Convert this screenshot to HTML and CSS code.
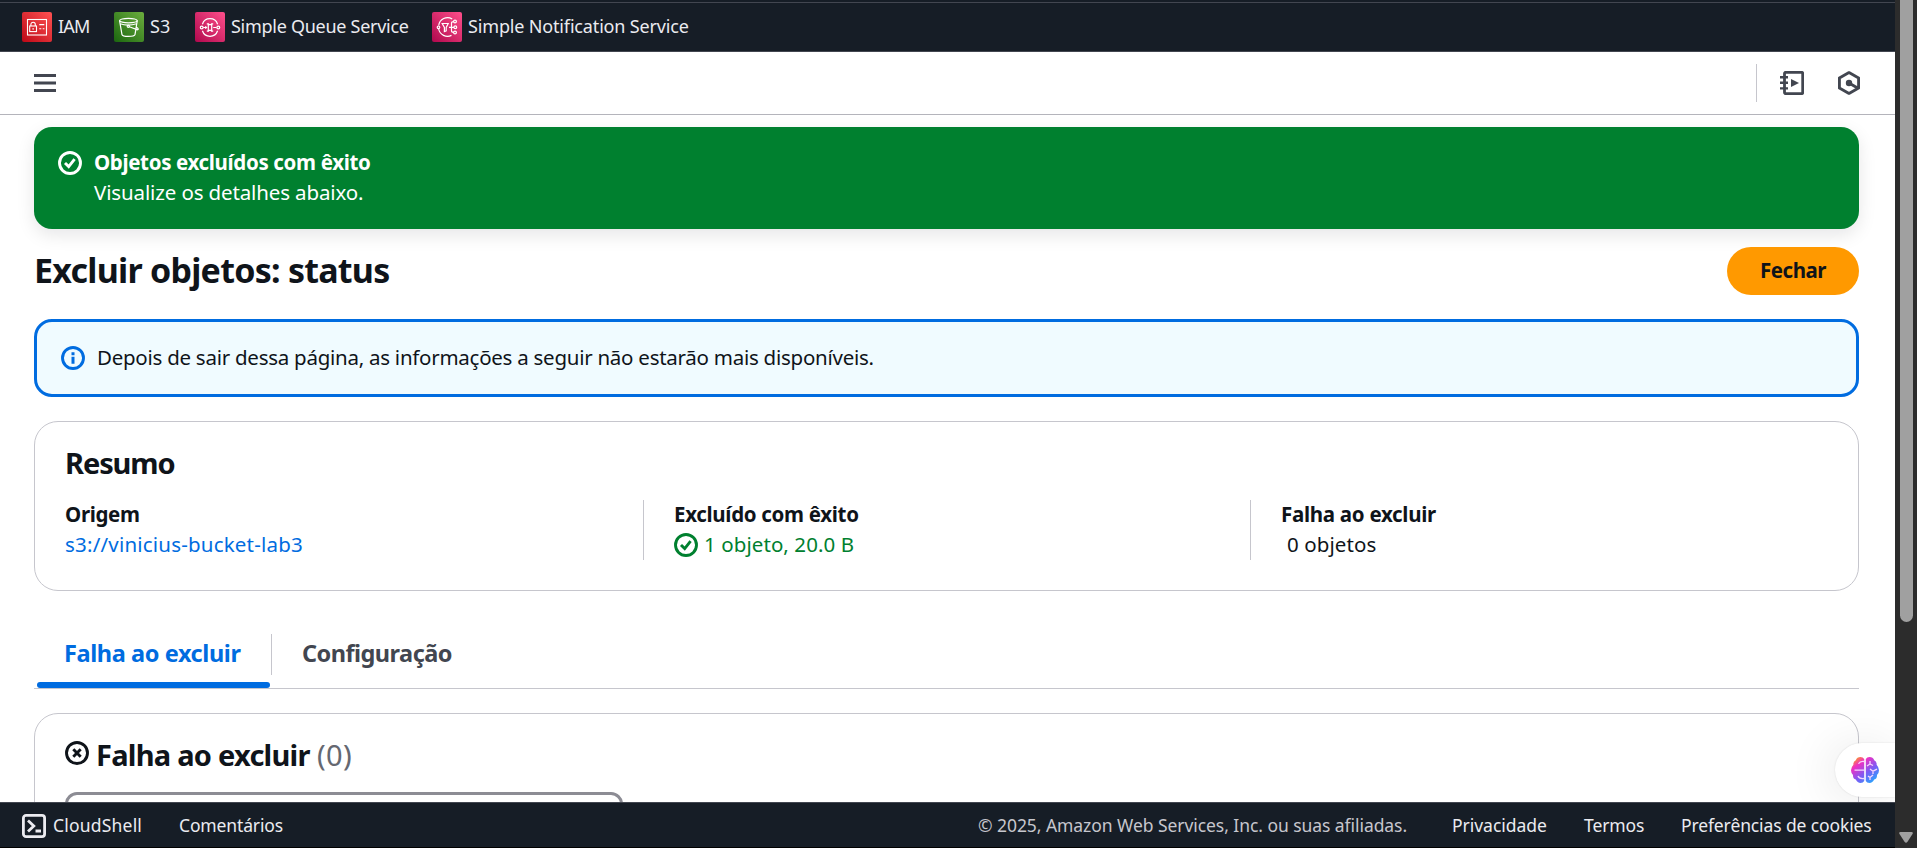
FILE: index.html
```html
<!DOCTYPE html>
<html lang="pt">
<head>
<meta charset="utf-8">
<title>Excluir objetos: status</title>
<link rel="stylesheet" href="styles.css">
</head>
<body>
<div class="window">
<div class="page">
  <nav class="favorites">
    <a class="fav fav-iam"><svg class="service" viewBox="0 0 30 30"><defs><linearGradient id="gr" x1="0" y1="1" x2="1" y2="0"><stop offset="0" stop-color="#bd0816"/><stop offset="1" stop-color="#ff5252"/></linearGradient></defs><rect width="30" height="30" rx="2" fill="url(#gr)"/><g fill="none" stroke="#fff" stroke-width="1.1"><rect x="5.5" y="7.5" width="19" height="15.5"/><rect x="7.7" y="14" width="6.8" height="5.6"/><path d="M8.9 14v-1.6a2.2 2.2 0 0 1 4.4 0V14M11.1 16v1.8M17.3 12.6h5M17.3 16.8h2M20.7 16.8h1.7"/></g></svg><span class="t-iam">IAM</span></a>
    <a class="fav fav-s3"><svg class="service" viewBox="0 0 30 30"><defs><linearGradient id="gg" x1="0" y1="1" x2="1" y2="0"><stop offset="0" stop-color="#1b660f"/><stop offset="1" stop-color="#6cae3e"/></linearGradient></defs><rect width="30" height="30" rx="2" fill="url(#gg)"/><g fill="none" stroke="#fff" stroke-width="1.2" stroke-linecap="round"><ellipse cx="14.4" cy="8.6" rx="8.8" ry="2.2"/><path d="M5.6 8.8 8 22.6q.4 1.8 6.4 1.8t6.6-1.8l2.2-13.8M6.2 11.8q7.5 2.8 16.4 0M15.3 14.7l8.2 3.1q1.2-.4.4-1.4l-1.6-1.4"/><circle cx="14.3" cy="14.3" r="1.1"/></g></svg><span class="t-s3">S3</span></a>
    <a class="fav fav-sqs"><svg class="service" viewBox="0 0 30 30"><defs><linearGradient id="gp" x1="0" y1="1" x2="1" y2="0"><stop offset="0" stop-color="#b0084d"/><stop offset="1" stop-color="#ff4f8b"/></linearGradient></defs><rect width="30" height="30" rx="2" fill="url(#gp)"/><g fill="none" stroke="#fff" stroke-width="1.2"><path d="M7.4 12.2a8 8 0 0 1 15.2 0M7.4 18.8a8 8 0 0 0 15.2 0"/><circle cx="6.7" cy="15.5" r="1.4"/><circle cx="23.3" cy="15.5" r="1.4"/><path d="M8.2 15.5h3.3m-1.2-1.2 1.2 1.2-1.2 1.2M18.2 15.5h3.3M11.8 11.8h1.7v.8h3v-.8h1.7M11.8 19.2h1.7v-.8h3v.8h1.7M13.3 12.5v6M16.7 12.5v6"/></g></svg><span class="t-sqs">Simple Queue Service</span></a>
    <a class="fav fav-sns"><svg class="service" viewBox="0 0 30 30"><rect width="30" height="30" rx="2" fill="url(#gp)"/><g fill="none" stroke="#fff" stroke-width="1.2"><path d="M6.7 13.5a9 9 0 0 1 13.5-6.6M6.7 17a9 9 0 0 0 12.8 6.4"/><circle cx="6.5" cy="15.3" r="1.3"/><path d="M10.2 11.5h6l-2 4v3.4l-1.8.8v-4.2zM17 15.3h5M19.5 15.3V11q0-1.4 2.2-1.4M19.5 15.3v3.5q0 1.6 2.2 1.6"/><circle cx="23" cy="9.5" r="1.4"/><circle cx="23.3" cy="15.2" r="1.4"/><circle cx="23" cy="20.5" r="1.4"/></g></svg><span class="t-sns">Simple Notification Service</span></a>
  </nav>

  <header class="appbar">
    <svg class="menu" viewBox="0 0 22 18" fill="#424650"><path d="M0 0h22v3H0zM0 7.5h22v3H0zM0 15h22v3H0z"/></svg>
    <div class="tools">
      <svg class="tool-book" viewBox="0 0 24 24" fill="none" stroke="#424650"><rect x="4.5" y="1.3" width="18.2" height="21.4" rx="1.2" stroke-width="2.8"/><path d="M0 6.2h8M0 11.8h8M0 17.4h8" stroke-width="2.4"/><path d="M11 8v8l8-4z" fill="#424650" stroke="none"/></svg>
      <svg class="tool-hex" viewBox="0 0 22 24" fill="none" stroke="#424650" stroke-width="2.9" stroke-linejoin="round"><path d="M11 1.6 20.6 7v10L11 22.4 1.4 17V7zM11 12l9 5.2"/><circle cx="11" cy="12" r="3.2" fill="#424650" stroke="none"/></svg>
    </div>
  </header>

  <main class="content">
    <section class="flash">
      <svg class="icon" viewBox="0 0 24 24" fill="none" stroke="currentColor" stroke-width="2.9"><circle cx="12" cy="12" r="10.5"/><path d="m7 12 3.7 3.6L16.6 8.2"/></svg>
      <div class="flash-text">
        <strong class="t-flash">Objetos excluídos com êxito</strong>
        <span class="t-flash-sub">Visualize os detalhes abaixo.</span>
      </div>
    </section>

    <div class="title-row">
      <h1>Excluir objetos: status</h1>
      <button class="close">Fechar</button>
    </div>

    <section class="alert">
      <svg class="icon" viewBox="0 0 24 24" fill="none" stroke="currentColor" stroke-width="2.9"><circle cx="12" cy="12" r="10.5"/><path d="M12 10.8v7M12 6.2v3" stroke-width="3"/></svg>
      <span>Depois de sair dessa página, as informações a seguir não estarão mais disponíveis.</span>
    </section>

    <section class="summary">
      <h2>Resumo</h2>
      <div class="columns">
        <div class="column"><b class="t-origin">Origem</b><a class="link">s3://vinicius-bucket-lab3</a></div>
        <div class="column"><b class="t-done">Excluído com êxito</b><span class="ok"><svg class="icon" viewBox="0 0 24 24" fill="none" stroke="currentColor" stroke-width="2.9"><circle cx="12" cy="12" r="10.5"/><path d="m7 12 3.7 3.6L16.6 8.2"/></svg><span>1 objeto, 20.0 B</span></span></div>
        <div class="column"><b class="t-fail">Falha ao excluir</b><span class="none">0 objetos</span></div>
      </div>
    </section>

    <div class="tabs">
      <div class="tab active">Falha ao excluir</div>
      <div class="tab other">Configuração</div>
    </div>

    <section class="failed">
      <h2><svg class="icon" viewBox="0 0 24 24" fill="none" stroke="currentColor" stroke-width="2.9"><circle cx="12" cy="12" r="10.5"/><path d="m8.3 8.3 7.4 7.4M15.7 8.3l-7.400 7.400"/></svg><span class="t-failed">Falha ao excluir</span><span class="counter">(0)</span></h2>
      <div class="search"></div>
    </section>
  </main>

  <div class="assistant">
    <svg viewBox="0 0 28 26"><defs><linearGradient id="gb" x1=".1" y1="0" x2=".9" y2="1"><stop offset="0" stop-color="#ffb400"/><stop offset=".25" stop-color="#f02fc2"/><stop offset=".6" stop-color="#7a5cf5"/><stop offset="1" stop-color="#18b4ff"/></linearGradient></defs><path fill="url(#gb)" d="M13.2 2Q12 0 9.5 0 6 0 4.8 3.2 2 4.6 2.4 7.800 0 10.500 0 13.200q0 3 2 4.800-.2 3.600 2.800 4.600Q6.500 26 9.500 26q2.700 0 3.700-2zM14.800 2Q16 0 18.500 0q3.500 0 4.700 3.200 2.800 1.400 2.400 4.600 2.400 2.700 2.400 5.400 0 3-2 4.800.2 3.600-2.800 4.600Q21.500 26 18.500 26q-2.700 0-3.700-2z"/><g fill="none" stroke="#f6d5ff" stroke-width="1.3"><path d="M13 4.500q-4-.5-5.500 2.300M3.500 13.200H13M13 21.500q-5 .5-6-2.500M19 4v3l-3 2M19 7l3 1.500M19 12l3 2.200 4-2M22 14v3M17 19l2 1.500L22 18M19 20v3"/></g></svg>
  </div>

  <footer class="footer">
    <svg class="shell" viewBox="0 0 24 24" fill="none" stroke="#ebebf0" stroke-width="2.8"><rect x="1.4" y="1.4" width="21.2" height="21.2" rx="2.7"/><path d="m6 6.500 5.800 5.500L6 17.500M13.500 17H19"/></svg>
    <span class="t-shell">CloudShell</span>
    <span class="t-feedback">Comentários</span>
    <span class="copyright">© 2025, Amazon Web Services, Inc. ou suas afiliadas.</span>
    <span class="t-privacy">Privacidade</span>
    <span class="t-terms">Termos</span>
    <span class="t-cookies">Preferências de cookies</span>
  </footer>
</div>
<div class="scrollbar">
  <div class="thumb"></div>
  <svg class="arrow" viewBox="0 0 14 11"><path d="M1.500 0h11q2 .3 1 2L8.500 9.800q-1.500 1.700-3 0L.5 2q-1-1.700 1-2z" fill="#a0a0a0"/></svg>
</div>
</div>
</body>
</html>
```
FILE: styles.css
```css
* { box-sizing: border-box; }
body {
  margin: 0;
  font-family: "Noto Sans", "Open Sans", sans-serif;
  font-size: 20.5px;
  line-height: 30px;
  color: #0f141a;
  background: #fff;
}
svg { display: block; flex: none; }
span, b, strong, a, h1, h2 { white-space: nowrap; }
h1, h2 { margin: 0; font-weight: 700; }
b, strong { font-weight: 700; }

.window { display: flex; height: 848px; overflow: hidden; }
.page { position: relative; width: 1895px; height: 848px; display: flex; flex-direction: column; overflow: hidden; }

.favorites {
  flex: none;
  display: flex;
  height: 52px;
  padding: 9px 0 0 22px;
  background: linear-gradient(#161d26 2px, #424650 2px, #424650 3px, #161d26 3px);
  border-bottom: 1px solid #424650;
  color: #ebebf0;
  font-size: 18px;
  line-height: 28px;
}
.fav { display: flex; padding-top: 3px; }
.fav span { padding-left: 6px; }
.service { width: 30px; height: 30px; }
.fav-iam { width: 92px; }
.fav-s3 { width: 81px; }
.fav-sqs { width: 237px; }
.t-iam { letter-spacing: -0.8px; }
.t-s3 { letter-spacing: 0.1px; }
.t-sqs { letter-spacing: -0.28px; }
.t-sns { letter-spacing: -0.16px; }

.appbar {
  flex: none;
  display: flex;
  align-items: center;
  justify-content: space-between;
  height: 63px;
  padding: 0 35px 0 34px;
  border-bottom: 1px solid #b4b4bb;
}
.menu { width: 22px; height: 18px; }
.tools { display: flex; align-items: center; height: 38px; border-left: 1px solid #c6c6cd; padding-left: 23px; gap: 34px; }
.tool-book { width: 24px; height: 24px; }
.tool-hex { width: 22px; height: 24px; }

.content { flex: 1; min-height: 0; overflow: hidden; padding: 12px 36px 0 34px; }
.icon { width: 24px; height: 24px; }

.flash {
  display: flex;
  gap: 12px;
  height: 102px;
  padding: 20px 24px;
  border-radius: 18px;
  background: #00802f;
  color: #fff;
  box-shadow: 0 6px 18px rgba(0, 7, 22, 0.1);
}
.flash .icon { margin-top: 4px; }
.flash-text { display: flex; flex-direction: column; }
.t-flash { letter-spacing: -0.35px; }
.t-flash-sub { letter-spacing: -0.13px; }

.title-row { display: flex; justify-content: space-between; padding-top: 18px; height: 90px; }
h1 { font-size: 34px; line-height: 47px; letter-spacing: -0.75px; }
.close {
  width: 132px;
  height: 48px;
  padding: 0 0 3px;
  border: 0;
  border-radius: 24px;
  background: #ff9900;
  color: #0f141a;
  font: 700 20.5px "Noto Sans", sans-serif;
  letter-spacing: -0.44px;
}

.alert {
  display: flex;
  align-items: center;
  gap: 12px;
  height: 78px;
  padding-left: 24px;
  border: 3px solid #006ce0;
  border-radius: 18px;
  background: #f0fbff;
  letter-spacing: -0.26px;
}
.alert .icon { color: #006ce0; }
.alert span { padding-bottom: 2px; }

.summary { height: 170px; margin-top: 24px; padding: 23px 30px 0; border: 1px solid #c6c6cd; border-radius: 24px; }
h2 { font-size: 29px; line-height: 36px; }
.summary h2 { letter-spacing: -1.1px; }
.columns { display: grid; grid-template-columns: 578px 607px 1fr; padding-top: 19px; }
.column { display: flex; flex-direction: column; height: 60px; }
.column b { height: 29px; line-height: 28px; }
.column + .column { border-left: 1px solid #c6c6cd; padding-left: 30px; }
.t-origin { letter-spacing: -0.34px; }
.link { color: #006ce0; letter-spacing: 0.2px; }
.t-done { letter-spacing: -0.32px; }
.t-fail { letter-spacing: -0.29px; }
.ok { display: flex; align-items: center; gap: 6px; color: #00802f; letter-spacing: 0.08px; }
.ok .icon { margin-top: 2px; }
.none { padding-left: 6px; letter-spacing: 0.1px; }

.tabs { display: flex; height: 61px; margin-top: 37px; border-bottom: 1px solid #c6c6cd; padding-top: 6px; }
.tab { position: relative; height: 54px; padding-top: 4px; font-size: 23.5px; line-height: 31px; font-weight: 700; white-space: nowrap; }
.active { width: 238px; padding-left: 30px; color: #006ce0; letter-spacing: -0.4px; }
.active::before { content: ""; position: absolute; left: 237px; top: 0; width: 1px; height: 41px; background: #c6c6cd; }
.active::after { content: ""; position: absolute; left: 3px; bottom: 0; width: 233px; height: 6px; border-radius: 3px; background: #006ce0; }
.other { padding-left: 30px; color: #424650; letter-spacing: -0.53px; }

.failed { height: 220px; margin-top: 24px; padding: 23px 30px; border: 1px solid #c6c6cd; border-radius: 24px; }
.failed h2 { display: flex; }
.failed .icon { margin-top: 4px; }
.t-failed { width: 215px; margin-left: 7px; letter-spacing: -0.75px; }
.counter { margin-left: 6px; font-weight: 400; color: #656871; letter-spacing: 0.36px; }
.search { width: 558px; height: 51px; margin-top: 19px; border: 3px solid #8c8c94; border-radius: 12px; }

.assistant {
  position: absolute;
  right: 0;
  top: 743px;
  width: 60px;
  height: 54px;
  padding: 14px 16px;
  border-radius: 27px 0 0 27px;
  background: #fff;
  box-shadow: 0 0 2px rgba(0, 0, 0, 0.12), -6px 2px 48px rgba(0, 0, 0, 0.09);
}
.assistant svg { width: 28px; height: 26px; }

.footer {
  position: relative;
  flex: none;
  display: flex;
  align-items: center;
  height: 46px;
  padding-left: 22px;
  background: #161d26;
  border-top: 1px solid #424650;
  border-bottom: 1px solid #000;
  color: #ebebf0;
  font-size: 17.5px;
  line-height: 24px;
}
.footer span { padding-bottom: 1px; }
.shell { width: 24px; height: 24px; margin-top: 2px; }
.t-shell { width: 126px; margin-left: 7px; letter-spacing: 0.2px; }
.t-feedback { width: 799px; letter-spacing: -0.14px; }
.copyright { width: 474px; color: #c6c6cd; letter-spacing: -0.06px; }
.t-privacy { width: 132px; letter-spacing: -0.03px; }
.t-terms { width: 97px; letter-spacing: -0.11px; }
.t-cookies { letter-spacing: -0.12px; }

.scrollbar { position: relative; width: 22px; height: 848px; background: #2c2c2c; padding-left: 5px; }
.thumb { width: 13px; height: 622px; background: #a0a0a0; border-radius: 0 0 7px 7px; }
.arrow { position: absolute; left: 4px; top: 832px; width: 14px; height: 11px; }
```
